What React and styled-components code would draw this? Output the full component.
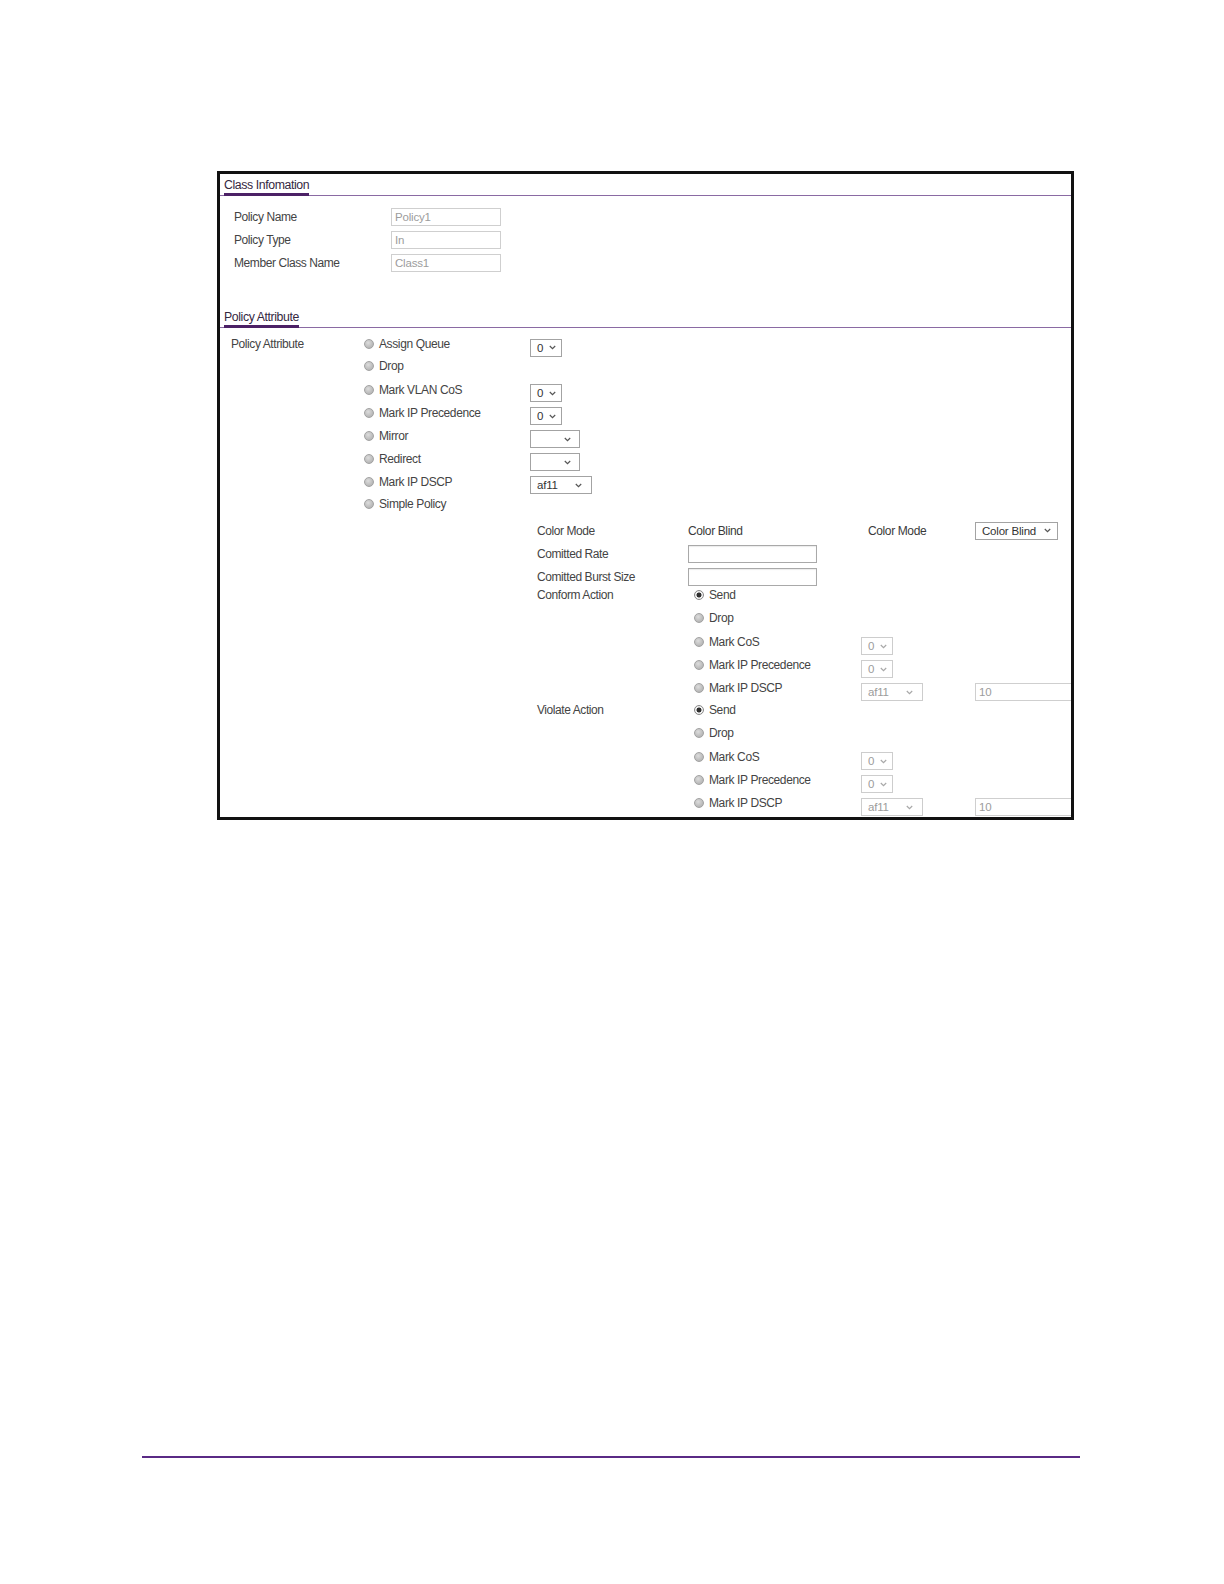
import React from 'react';
import styled, { createGlobalStyle } from 'styled-components';

const GlobalStyle = createGlobalStyle`
  html, body { margin: 0; padding: 0; background: #fff; }
  body { font-family: "Liberation Sans", Arial, sans-serif; }
  * { box-sizing: border-box; }
`;

const Page = styled.div`
  width: 1224px;
  min-height: 1584px;
  padding-top: 171px;
`;

const Frame = styled.div`
  margin-left: 217px;
  width: 857px;
  height: 649px;
  border: 3px solid #111;
  overflow: hidden;
  background: #fff;
`;

const SectionHeader = styled.div`
  margin-top: ${(p) => p.$top || 0}px;
  height: 22px;
  padding-left: 4px;
  border-bottom: 1px solid #8a6aa3;
  display: flex;
  align-items: flex-end;
`;

const SectionTitle = styled.span`
  font-size: 12.3px;
  line-height: 15px;
  letter-spacing: -0.4px;
  color: #35283f;
  border-bottom: 3px solid #4c2166;
  margin-bottom: -1px;
`;

const InfoBlock = styled.div`
  padding: 9px 0 0 14px;
`;

const InfoRow = styled.div`
  display: flex;
  align-items: center;
  height: 23px;
`;

const Label = styled.span`
  width: ${(p) => p.$w || 157}px;
  flex-shrink: 0;
  font-size: 12px;
  letter-spacing: -0.42px;
  color: #444;
  white-space: nowrap;
`;

const TextField = styled.div`
  width: ${(p) => p.$w || 110}px;
  height: 18px;
  flex-shrink: 0;
  border: 1px solid ${(p) => (p.$disabled ? '#cfcfcf' : '#a9a9a9')};
  box-shadow: ${(p) => (p.$disabled ? 'none' : 'inset 0 1px 1px rgba(0,0,0,0.08)')};
  background: #fff;
  padding: 0 3px;
  font-size: 11.5px;
  letter-spacing: -0.2px;
  color: #9c9c9c;
  display: flex;
  align-items: center;
  white-space: nowrap;
  align-self: ${(p) => (p.$shift != null ? 'start' : 'auto')};
  margin-top: ${(p) => (p.$shift != null ? p.$shift : 0)}px;
`;

const AttrList = styled.div`
  padding: 3px 0 0 11px;
`;

const AttrRow = styled.div`
  display: grid;
  grid-template-columns: 133px 166px 1fr;
  height: 23px;
  align-items: center;
`;

const RadioItem = styled.label`
  display: flex;
  align-items: center;
  font-size: 12px;
  letter-spacing: -0.38px;
  color: #444;
  white-space: nowrap;
`;

const RadioDot = styled.span`
  width: 10px;
  height: 10px;
  border-radius: 50%;
  margin-right: 5px;
  flex-shrink: 0;
  border: 1px solid ${(p) => (p.$checked ? '#8a8a8a' : '#a2a2a2')};
  background: ${(p) =>
    p.$checked
      ? 'radial-gradient(circle, #2f2f2f 0, #2f2f2f 2.2px, #f4f4f4 2.8px, #e2e2e2 100%)'
      : 'radial-gradient(circle at 40% 35%, #dcdcdc 0, #bdbdbd 60%, #ababab 100%)'};
`;

const SelectCell = styled.div`
  align-self: start;
  margin-top: ${(p) => p.$shift}px;
`;

const SelectBox = styled.div`
  width: ${(p) => p.$w}px;
  height: 18px;
  border: 1px solid ${(p) => (p.$disabled ? '#cdcdcd' : '#a3a3a3')};
  background: #fff;
  display: flex;
  align-items: center;
  justify-content: space-between;
  padding: 0 ${(p) => p.$pr}px 0 ${(p) => p.$pl}px;
  font-size: 11.5px;
  letter-spacing: -0.2px;
  color: ${(p) => (p.$disabled ? '#9c9c9c' : '#333')};
  white-space: nowrap;
`;

const SimpleArea = styled.div`
  padding-left: 317px;
  margin-top: 4px;
`;

const ModeRow = styled.div`
  display: grid;
  grid-template-columns: 151px 180px 107px 1fr;
  height: 23px;
  align-items: center;
`;

const ValueText = styled.span`
  font-size: 12px;
  letter-spacing: -0.38px;
  color: #3a3a3a;
  white-space: nowrap;
`;

const ActionArea = styled.div`
  margin-top: -5px;
`;

const ActionRow = styled.div`
  display: grid;
  grid-template-columns: 157px 167px 114px 1fr;
  height: 23px;
  align-items: center;
`;

const FooterRule = styled.div`
  margin: 636px 0 0 142px;
  width: 938px;
  height: 1.5px;
  background: #5a2a85;
`;

const Chevron = ({ disabled }) => (
  <svg width="7" height="5" viewBox="0 0 7 5" fill="none">
    <path
      d="M0.8 1 L3.5 3.7 L6.2 1"
      stroke={disabled ? '#a8a8a8' : '#555'}
      strokeWidth="1.2"
    />
  </svg>
);

const Select = ({ value = '', w = 32, pl = 6, pr = 5, disabled }) => (
  <SelectBox $w={w} $pl={pl} $pr={pr} $disabled={disabled}>
    <span>{value}</span>
    <Chevron disabled={disabled} />
  </SelectBox>
);

const Radio = ({ label, checked }) => (
  <RadioItem>
    <RadioDot $checked={checked} />
    {label}
  </RadioItem>
);

const attrs = [
  { label: 'Assign Queue', select: { value: '0', w: 32 } },
  { label: 'Drop' },
  { label: 'Mark VLAN CoS', select: { value: '0', w: 32 } },
  { label: 'Mark IP Precedence', select: { value: '0', w: 32 } },
  { label: 'Mirror', select: { value: '', w: 50, pr: 8 } },
  { label: 'Redirect', select: { value: '', w: 50, pr: 8 } },
  { label: 'Mark IP DSCP', select: { value: 'af11', w: 62, pr: 9 } },
  { label: 'Simple Policy' },
];

const actionItems = [
  { label: 'Send', checked: true },
  { label: 'Drop' },
  { label: 'Mark CoS', select: { value: '0', w: 32 } },
  { label: 'Mark IP Precedence', select: { value: '0', w: 32 } },
  { label: 'Mark IP DSCP', select: { value: 'af11', w: 62, pr: 9 }, field: '10' },
];

const ActionGroup = ({ title }) =>
  actionItems.map((it, i) => (
    <ActionRow key={title + i}>
      <Label $w={157}>{i === 0 ? title : ''}</Label>
      <Radio label={it.label} checked={it.checked} />
      <SelectCell $shift={8}>
        {it.select && <Select {...it.select} disabled />}
      </SelectCell>
      {it.field ? (
        <TextField $w={130} $disabled $shift={8}>
          {it.field}
        </TextField>
      ) : (
        <span />
      )}
    </ActionRow>
  ));

export default function App() {
  return (
    <>
      <GlobalStyle />
      <Page>
        <Frame>
          <SectionHeader>
            <SectionTitle>Class Infomation</SectionTitle>
          </SectionHeader>
          <InfoBlock>
            <InfoRow>
              <Label>Policy Name</Label>
              <TextField $disabled>Policy1</TextField>
            </InfoRow>
            <InfoRow>
              <Label>Policy Type</Label>
              <TextField $disabled>In</TextField>
            </InfoRow>
            <InfoRow>
              <Label>Member Class Name</Label>
              <TextField $disabled>Class1</TextField>
            </InfoRow>
          </InfoBlock>

          <SectionHeader $top={32}>
            <SectionTitle>Policy Attribute</SectionTitle>
          </SectionHeader>
          <AttrList>
            {attrs.map((a, i) => (
              <AttrRow key={a.label}>
                <Label $w={133}>{i === 0 ? 'Policy Attribute' : ''}</Label>
                <Radio label={a.label} />
                <SelectCell $shift={i === 0 ? 7.5 : 7}>
                  {a.select && <Select {...a.select} />}
                </SelectCell>
              </AttrRow>
            ))}
          </AttrList>

          <SimpleArea>
            <ModeRow>
              <Label $w={151}>Color Mode</Label>
              <ValueText>Color Blind</ValueText>
              <ValueText>Color Mode</ValueText>
              <Select value="Color Blind" w={83} pl={6} pr={6} />
            </ModeRow>
            <ModeRow>
              <Label $w={151}>Comitted Rate</Label>
              <TextField $w={129} />
              <span />
              <span />
            </ModeRow>
            <ModeRow>
              <Label $w={151}>Comitted Burst Size</Label>
              <TextField $w={129} />
              <span />
              <span />
            </ModeRow>
            <ActionArea>
              <ActionGroup title="Conform Action" />
              <ActionGroup title="Violate Action" />
            </ActionArea>
          </SimpleArea>
        </Frame>
        <FooterRule />
      </Page>
    </>
  );
}
